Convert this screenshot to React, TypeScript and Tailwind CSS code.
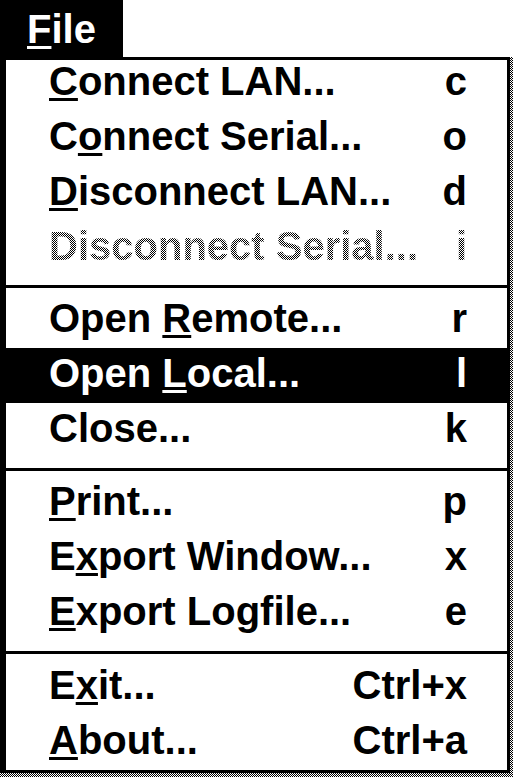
type Item = {
  label: string;
  mnemonic: number;
  shortcut: string;
  disabled?: boolean;
  active?: boolean;
};

const sections: { items: Item[]; pad: string; lift: string }[] = [
  {
    pad: "pt-0 pb-[5px]",
    lift: "pb-[14px]",
    items: [
      { label: "Connect LAN...", mnemonic: 0, shortcut: "c" },
      { label: "Connect Serial...", mnemonic: 1, shortcut: "o" },
      { label: "Disconnect LAN...", mnemonic: 0, shortcut: "d" },
      { label: "Disconnect Serial...", mnemonic: 1, shortcut: "i", disabled: true },
    ],
  },
  {
    pad: "pt-[5px] pb-[10px]",
    lift: "pb-[6px]",
    items: [
      { label: "Open Remote...", mnemonic: 5, shortcut: "r" },
      { label: "Open Local...", mnemonic: 5, shortcut: "l", active: true },
      { label: "Close...", mnemonic: -1, shortcut: "k" },
    ],
  },
  {
    pad: "pt-[5px] pb-[10px]",
    lift: "pb-[6px]",
    items: [
      { label: "Print...", mnemonic: 0, shortcut: "p" },
      { label: "Export Window...", mnemonic: 1, shortcut: "x" },
      { label: "Export Logfile...", mnemonic: 0, shortcut: "e" },
    ],
  },
  {
    pad: "pt-[6px] pb-0",
    lift: "pb-[6px]",
    items: [
      { label: "Exit...", mnemonic: 1, shortcut: "Ctrl+x" },
      { label: "About...", mnemonic: 0, shortcut: "Ctrl+a" },
    ],
  },
];

const dither =
  "bg-[repeating-conic-gradient(#000_0_25%,#fff_0_50%)] bg-[length:2px_2px]";

function Label({ text, at }: { text: string; at: number }) {
  if (at < 0) return <>{text}</>;
  return (
    <>
      {text.slice(0, at)}
      <span className="underline decoration-[3px] underline-offset-[3px]">{text[at]}</span>
      {text.slice(at + 1)}
    </>
  );
}

function Row({ item, lift }: { item: Item; lift: string }) {
  const tone = item.active ? "bg-black text-white" : "text-black";
  const textCls = item.disabled
    ? `${dither} bg-clip-text text-transparent decoration-[#666]`
    : "";

  return (
    <div className={`h-[55px] flex items-center justify-between pl-[43px] pr-[40px] ${lift} ${tone}`}>
      <span className={textCls}>
        <Label text={item.label} at={item.mnemonic} />
      </span>
      <span className={textCls}>{item.shortcut}</span>
    </div>
  );
}

export default function App() {
  return (
    <div className="w-[513px] h-[777px] bg-white font-['Liberation_Sans',Arial,sans-serif] font-bold text-[40px] leading-[40px] select-none">
      <div className="w-[123px] h-[57px] bg-black text-white flex items-center pl-[27px]">
        <span>
          <Label text="File" at={0} />
        </span>
      </div>

      <div className={`w-[513px] h-[720px] pr-[3px] pb-[4px] ${dither}`}>
        <div className="h-full bg-white border-t-[3px] border-l-[6px] border-r-[3px] border-b-[3px] border-black flex flex-col">
          {sections.map((sec, i) => (
            <div key={i} className={i > 0 ? "border-t-[3px] border-black" : ""}>
              <div className={sec.pad}>
                {sec.items.map((item) => (
                  <Row key={item.label} item={item} lift={sec.lift} />
                ))}
              </div>
            </div>
          ))}
        </div>
      </div>
    </div>
  );
}
